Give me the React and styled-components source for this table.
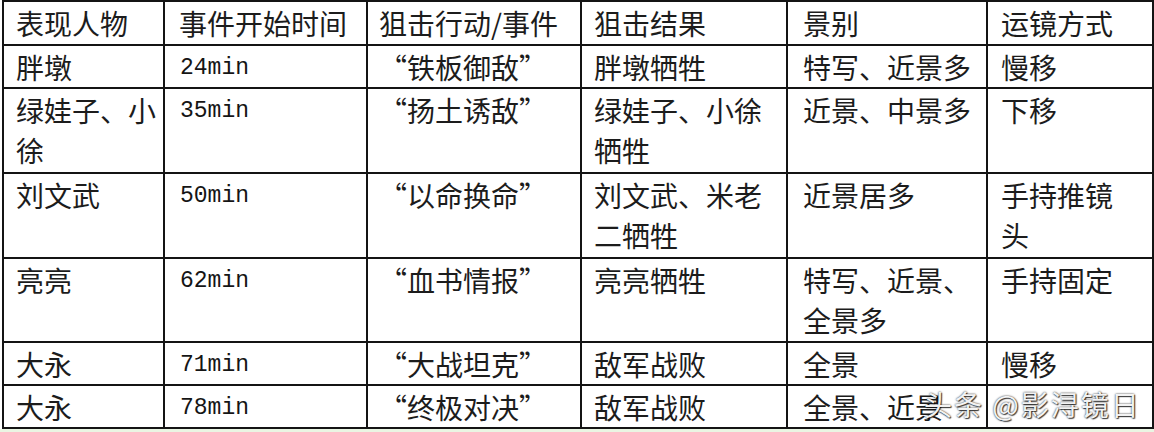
import React from "react";
import styled, { createGlobalStyle } from "styled-components";

const GlobalStyle = createGlobalStyle`
    html, body {
        margin: 0;
        padding: 0;
        background: #ffffff;
    }
`;

const Page = styled.div`
    position: relative;
    width: 1154px;
    height: 432px;
    display: flex;
    flex-direction: column;
    overflow: hidden;
    background: #ffffff;
`;

const Wrap = styled.div`
    padding: 0 0 0 2px;
`;

const Table = styled.table`
    border-collapse: collapse;
    table-layout: fixed;
    width: 1150px;
    border: 2px solid #141414;
    font-family: "Noto Sans CJK SC", "Noto Sans", sans-serif;
    font-size: 28px;
    color: #1c1c1c;
`;

const Row = styled.tr`
    height: ${({ $h }) => $h}px;
`;

const Cell = styled.td`
    border: 2px solid #141414;
    vertical-align: top;
    padding: ${({ $pad }) => `1px 0 0 ${$pad}px`};
    line-height: 40px;
    white-space: nowrap;
    overflow: hidden;
`;

const Line = styled.div`
    height: 40px;
    line-height: 40px;
`;

const Mono = styled.div`
    height: 40px;
    line-height: 42px;
    font-family: "Liberation Mono", "DejaVu Sans Mono", monospace;
    font-size: 23px;
    color: #151515;
    padding-left: 1px;
`;

const Strip = styled.div`
    flex: 1;
    background: #eaf5e3;
`;

// 平台水印，盖在最后一行上
const Watermark = styled.div`
    position: absolute;
    left: 924px;
    top: 387px;
    font-family: "Noto Sans CJK SC", "Noto Sans", sans-serif;
    font-size: 28px;
    line-height: 34px;
    letter-spacing: 2px;
    color: rgba(255, 255, 255, 0.95);
    white-space: nowrap;
    text-shadow: 0 0 2px rgba(0, 0, 0, 0.9), 1px 1px 1px rgba(0, 0, 0, 0.7);
`;

const widths = [161, 203, 214, 206, 200, 166];
const pads = [12, 14, 11, 12, 15, 13];

const rows = [
    { h: 44, cells: [["表现人物"], ["事件开始时间"], ["狙击行动/事件"], ["狙击结果"], ["景别"], ["运镜方式"]] },
    { h: 43, cells: [["胖墩"], "24min", ["“铁板御敌”"], ["胖墩牺牲"], ["特写、近景多"], ["慢移"]] },
    { h: 85, cells: [["绿娃子、小", "徐"], "35min", ["“扬土诱敌”"], ["绿娃子、小徐", "牺牲"], ["近景、中景多"], ["下移"]] },
    { h: 85, cells: [["刘文武"], "50min", ["“以命换命”"], ["刘文武、米老", "二牺牲"], ["近景居多"], ["手持推镜", "头"]] },
    { h: 84, cells: [["亮亮"], "62min", ["“血书情报”"], ["亮亮牺牲"], ["特写、近景、", "全景多"], ["手持固定"]] },
    { h: 42, cells: [["大永"], "71min", ["“大战坦克”"], ["敌军战败"], ["全景"], ["慢移"]] },
    { h: 43, cells: [["大永"], "78min", ["“终极对决”"], ["敌军战败"], ["全景、近景"], []] },
];

const App = () => {
    return (
        <Page>
            <GlobalStyle />
            <Wrap>
                <Table>
                    <colgroup>
                        {widths.map((w, i) => (
                            <col key={i} style={{ width: w }} />
                        ))}
                    </colgroup>
                    <tbody>
                        {rows.map((r, ri) => (
                            <Row key={ri} $h={r.h}>
                                {r.cells.map((c, ci) => (
                                    <Cell key={ci} $pad={pads[ci]}>
                                        {typeof c === "string" ? (
                                            <Mono>{c}</Mono>
                                        ) : (
                                            c.map((line, li) => <Line key={li}>{line}</Line>)
                                        )}
                                    </Cell>
                                ))}
                            </Row>
                        ))}
                    </tbody>
                </Table>
            </Wrap>
            <Strip />
            <Watermark>头条 @影浔镜日</Watermark>
        </Page>
    );
};

export default App;
